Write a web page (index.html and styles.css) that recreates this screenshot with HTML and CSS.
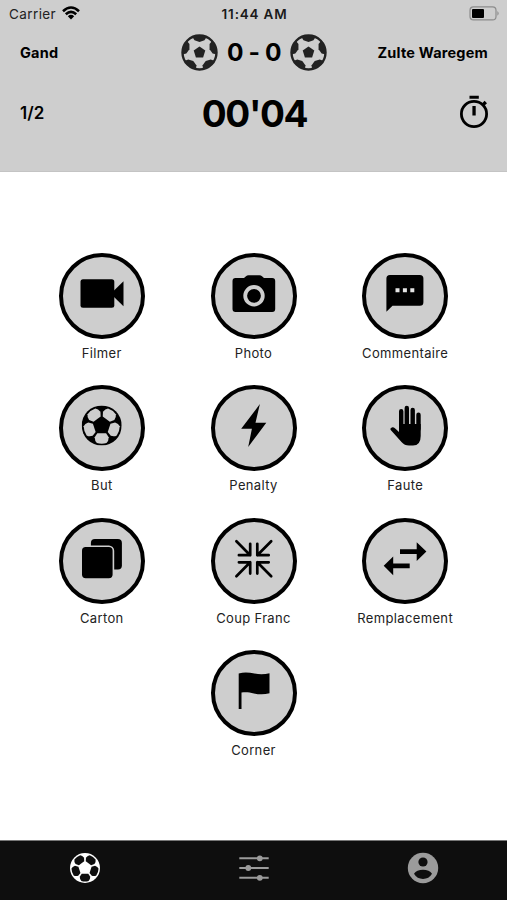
FILE: index.html
```html
<!DOCTYPE html>
<html lang="fr">
<head>
  <meta charset="UTF-8" />
  <meta name="viewport" content="width=device-width, initial-scale=1.0" />
  <title>Gand - Zulte Waregem</title>
  <link rel="stylesheet" href="styles.css">
</head>
<body>

<svg class="defs">
  <symbol id="ball" viewBox="-20 -20 40 40">
    <circle r="20" fill="currentColor" />
    <g class="patch">
      <path id="hex" d="M-4.4 7.8H4.4L7 11.8Q7 15.5 4.8 17.4Q0 18.9 -4.8 17.4Q-7 15.5 -7 11.8Z" />
      <use href="#hex" transform="rotate(72)" />
      <use href="#hex" transform="rotate(144)" />
      <use href="#hex" transform="rotate(216)" />
      <use href="#hex" transform="rotate(288)" />
    </g>
  </symbol>
  <symbol id="crest" viewBox="-18.5 -18.5 37 37">
    <circle r="17" fill="none" stroke="currentColor" stroke-width="2.4" />
    <path d="M0 -6L5.8 -1.9L3.6 4.9H-3.6L-5.8 -1.9Z" fill="currentColor" />
    <g fill="currentColor">
      <path id="edge" d="M-7.4 -16L-5 -12.2L0 -10.6L5 -12.2L7.4 -16Q0 -19 -7.4 -16Z" />
      <use href="#edge" transform="rotate(72)" />
      <use href="#edge" transform="rotate(144)" />
      <use href="#edge" transform="rotate(216)" />
      <use href="#edge" transform="rotate(288)" />
    </g>
  </symbol>
</svg>

<header class="header">
  <div class="status">
    <div class="carrier">
      <span>Carrier</span>
      <svg class="wifi" viewBox="0 0 18 14">
        <g fill="none" stroke="currentColor" stroke-width="2.6">
          <path d="M1 5.2Q9 -2.2 17 5.2" />
          <path d="M3.8 8.3Q9 3.6 14.2 8.3" />
        </g>
        <path d="M5.8 10.2Q9 7.4 12.2 10.2L9 13.6Z" />
      </svg>
    </div>
    <div class="time">11:44 AM</div>
    <svg class="battery" viewBox="0 0 31 15">
      <rect x="1" y=".9" width="26" height="13" rx="3.5" fill="none" stroke="#8c8c8c" stroke-width="1.2" />
      <rect x="3" y="2.9" width="12" height="9" rx="1" />
      <path d="M28.4 5Q31 7.4 28.4 9.8Z" fill="#8c8c8c" />
    </svg>
  </div>
  <div class="teams">
    <div class="team">Gand</div>
    <div class="score">
      <svg class="crest"><use href="#crest" /></svg>
      <span class="goals">0 - 0</span>
      <svg class="crest"><use href="#crest" /></svg>
    </div>
    <div class="team right">Zulte Waregem</div>
  </div>
  <div class="clock">
    <div class="half">1/2</div>
    <div class="timer">00'04</div>
    <svg class="stopwatch" viewBox="0 0 30 34">
      <circle cx="15" cy="20" r="12.6" fill="none" stroke="currentColor" stroke-width="2.8" />
      <path d="M10.5 1.7H19.8V4.8H10.5ZM13.4 12H16.7V21.5H13.4ZM22.2 10.2L25.6 6.8L28 9.2L24.6 12.6Z" />
    </svg>
  </div>
</header>

<main class="actions">
  <div class="action">
    <div class="circle">
      <svg viewBox="0 0 48 48">
        <rect x="2.5" y="7.3" width="33.8" height="28.4" rx="2.5" />
        <path d="M45.5 9.3V34.2L35.5 24.5V19Z" />
      </svg>
    </div>
    <div class="label">Filmer</div>
  </div>
  <div class="action">
    <div class="circle">
      <svg viewBox="0 0 48 48">
        <path d="M5.5 6H14L16 4.2Q17 3.3 18.5 3.3H29.5Q31 3.3 32 4.2L34 6H42.2Q45.2 6 45.2 9V37Q45.2 40 42.2 40H5.5Q2.5 40 2.5 37V9Q2.5 6 5.5 6Z" />
        <circle cx="24" cy="23.8" r="8.8" fill="none" stroke="#cecece" stroke-width="3.8" />
      </svg>
    </div>
    <div class="label">Photo</div>
  </div>
  <div class="action">
    <div class="circle">
      <svg viewBox="0 0 48 48">
        <path d="M8.9 3H38.9Q42.4 3 42.4 6.5V30.2Q42.4 33.7 38.9 33.7H11.5L5.4 39.8V6.5Q5.4 3 8.9 3Z" />
        <path fill="#e4e4e4" d="M14.5 16.3h4v4h-4zM21.9 16.3h4v4h-4zM29.3 16.3h4v4h-4z" />
      </svg>
    </div>
    <div class="label">Commentaire</div>
  </div>

  <div class="action">
    <div class="circle">
      <svg viewBox="0 0 48 48"><use href="#ball" x="3.7" y="1.5" width="40" height="40" /></svg>
    </div>
    <div class="label">But</div>
  </div>
  <div class="action">
    <div class="circle">
      <svg viewBox="0 0 48 48">
        <path d="M29.9 .1L25.5 18.7H36.3L18.2 43.1L21.9 24.8H11.2Z" />
      </svg>
    </div>
    <div class="label">Penalty</div>
  </div>
  <div class="action">
    <div class="circle">
      <svg viewBox="0 0 48 48">
        <path d="M20.2 7.2V25M25.8 4V25M31.7 6V25M37.5 10.7V25" fill="none" stroke="currentColor" stroke-width="4.4" stroke-linecap="round" />
        <path d="M18 28V20H39.7V32Q39.7 41.5 32 41.5H28Q23.5 41.5 20.5 38L9.5 25.8Q8.8 24 10.8 23.4Q12.5 23 14.5 24.7Z" />
      </svg>
    </div>
    <div class="label">Faute</div>
  </div>

  <div class="action">
    <div class="circle">
      <svg viewBox="0 0 48 48">
        <rect x="12.9" y="2" width="31" height="30.4" rx="4" />
        <rect x="3.2" y="9.2" width="32.2" height="32.8" rx="4.5" stroke="#cecece" stroke-width="1.6" />
      </svg>
    </div>
    <div class="label">Carton</div>
  </div>
  <div class="action">
    <div class="circle">
      <svg viewBox="0 0 48 48">
        <g fill="none" stroke="currentColor" stroke-width="2.7" stroke-linecap="round" stroke-linejoin="round">
          <path d="M6.4 4.2L20.2 18.2M20.2 6.8V18.2H8.9" />
          <path d="M41.2 4.2L27.3 18.2M27.3 6.8V18.2H38.7" />
          <path d="M6.4 39.2L20.2 25.3M20.2 36.6V25.3H8.9" />
          <path d="M41.2 39.2L27.3 25.3M27.3 36.6V25.3H38.7" />
        </g>
      </svg>
    </div>
    <div class="label">Coup Franc</div>
  </div>
  <div class="action">
    <div class="circle">
      <svg viewBox="0 0 48 48">
        <path d="M19 12.2H35.7V5.3L45.4 14.6L35.7 24V17H19Z" />
        <path d="M28.7 26.5H12.2V19.4L2.7 28.8L12.2 38.2V31.3H28.7Z" />
      </svg>
    </div>
    <div class="label">Remplacement</div>
  </div>

  <div class="action last">
    <div class="circle">
      <svg viewBox="0 0 48 48">
        <path d="M8.7 4.5C14 2.8 19 3.3 24.5 4.6C30 5.8 35 5.5 39.5 4.2V24.2C34 25.8 29 25.6 24 24.4C19 23.2 15.5 23 11.5 23.6V40H8.7Z" />
      </svg>
    </div>
    <div class="label">Corner</div>
  </div>
</main>

<nav class="tabs">
  <div class="tab active">
    <svg viewBox="0 0 32 32"><use href="#ball" x="1" y="1" width="30" height="30" /></svg>
  </div>
  <div class="tab">
    <svg viewBox="0 0 32 32">
      <path d="M1.3 6.3H30.7M1.3 16H30.7M1.3 25.8H30.7" stroke="currentColor" stroke-width="2" />
      <circle cx="21.8" cy="6.3" r="2.9" />
      <circle cx="10.3" cy="16" r="2.9" />
      <circle cx="21.8" cy="25.8" r="2.9" />
    </svg>
  </div>
  <div class="tab">
    <svg viewBox="0 0 32 32">
      <circle cx="16" cy="16" r="15.2" />
      <g fill="#0e0e0e">
        <circle cx="16" cy="10" r="4.6" />
        <path d="M7 21.8C8.5 18.8 12 17.7 16 17.7S23.5 18.8 25 21.8C23 25.2 19.8 27 16 27S9 25.2 7 21.8Z" />
      </g>
    </svg>
  </div>
</nav>

</body>
</html>
```

FILE: styles.css
```css
* {
  box-sizing: border-box;
}
body {
  font-family: Inter, "Liberation Sans", sans-serif;
  background: #fff;
  color: #000;
  margin: 0;
  height: 900px;
  display: flex;
  flex-direction: column;
  overflow: hidden;
}
svg {
  display: block;
  fill: currentColor;
}
.defs {
  position: absolute;
  width: 0;
  height: 0;
}
.header {
  height: 172px;
  background: #cecece;
  border-bottom: 1px solid #c4c4c4;
}
.status,
.teams,
.clock {
  display: grid;
  grid-template-columns: 1fr auto 1fr;
  align-items: center;
}
.status {
  height: 28px;
  padding: 0 7px 0 9px;
  font-size: 13.5px;
}
.carrier {
  display: flex;
  align-items: center;
  gap: 6px;
  letter-spacing: 0.4px;
  color: #222;
}
.wifi {
  width: 18px;
  height: 14px;
  color: #000;
  margin-top: -3px;
}
.time {
  font-weight: 600;
  letter-spacing: 0.8px;
  color: #1a1a1a;
}
.battery {
  width: 31px;
  height: 15px;
  justify-self: end;
  margin-top: -1px;
}
.teams {
  height: 48px;
  padding: 0 19px 0 20px;
}
.team {
  font-size: 14.5px;
  font-weight: 700;
  letter-spacing: 0.2px;
}
.team.right {
  text-align: right;
}
.score {
  display: flex;
  align-items: center;
  gap: 9px;
}
.crest {
  width: 37px;
  height: 37px;
  color: #222;
}
.goals {
  font-size: 24.5px;
  font-weight: 700;
  letter-spacing: -0.4px;
}
.clock {
  height: 74px;
  padding: 0 18px 0 20px;
}
.half {
  font-size: 17px;
  font-weight: 600;
}
.timer {
  font-size: 37px;
  font-weight: 700;
  letter-spacing: -1.4px;
}
.stopwatch {
  width: 30px;
  height: 34px;
  justify-self: end;
  margin-top: -4px;
}
.actions {
  flex: 1;
  display: grid;
  grid-template-columns: repeat(3, 151.7px);
  grid-auto-rows: 132.3px;
  justify-content: center;
  padding-top: 81px;
}
.action {
  display: flex;
  flex-direction: column;
  align-items: center;
}
.action.last {
  grid-column: 2;
}
.circle {
  width: 86px;
  height: 86px;
  border: 4px solid #000;
  border-radius: 50%;
  background: #cecece;
  display: flex;
  align-items: center;
  justify-content: center;
}
.circle svg {
  width: 48px;
  height: 48px;
}
.patch {
  fill: var(--patch, #cecece);
}
.label {
  margin-top: 5px;
  font-size: 13px;
  line-height: 18px;
  letter-spacing: 0.35px;
  color: #222;
  white-space: nowrap;
}
.tabs {
  height: 60px;
  background: #0e0e0e;
  border-top: 1px solid #777;
  display: flex;
}
.tab {
  flex: 1;
  display: flex;
  justify-content: center;
  padding-top: 11px;
  color: #9b9b9b;
}
.tab.active {
  --patch: #0e0e0e;
  color: #fff;
}
.tab svg {
  width: 32px;
  height: 32px;
}
```
